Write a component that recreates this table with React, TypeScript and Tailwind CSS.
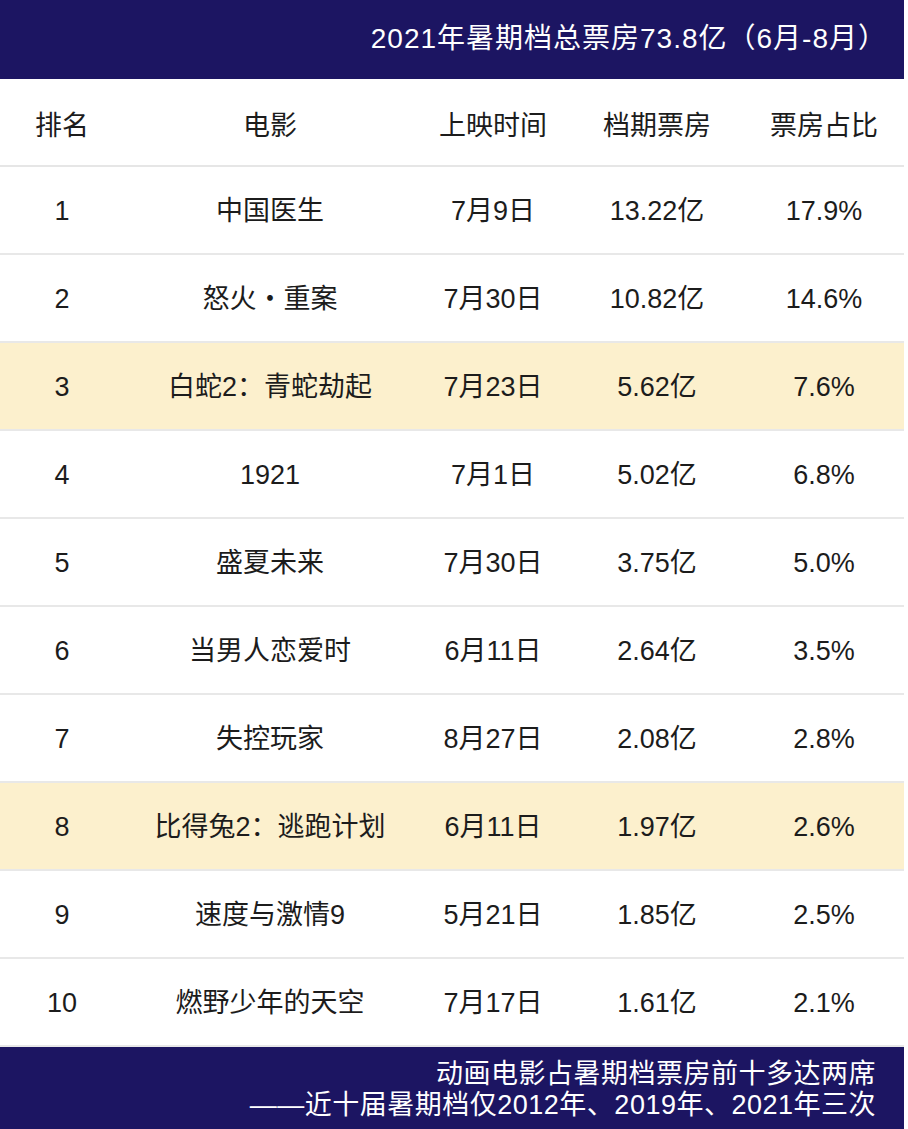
import React from "react";

type Row = {
  rank: string;
  title: string;
  date: string;
  gross: string;
  share: string;
  highlight?: boolean;
};

const rows: Row[] = [
  { rank: "1", title: "中国医生", date: "7月9日", gross: "13.22亿", share: "17.9%" },
  { rank: "2", title: "怒火・重案", date: "7月30日", gross: "10.82亿", share: "14.6%" },
  { rank: "3", title: "白蛇2：青蛇劫起", date: "7月23日", gross: "5.62亿", share: "7.6%", highlight: true },
  { rank: "4", title: "1921", date: "7月1日", gross: "5.02亿", share: "6.8%" },
  { rank: "5", title: "盛夏未来", date: "7月30日", gross: "3.75亿", share: "5.0%" },
  { rank: "6", title: "当男人恋爱时", date: "6月11日", gross: "2.64亿", share: "3.5%" },
  { rank: "7", title: "失控玩家", date: "8月27日", gross: "2.08亿", share: "2.8%" },
  { rank: "8", title: "比得兔2：逃跑计划", date: "6月11日", gross: "1.97亿", share: "2.6%", highlight: true },
  { rank: "9", title: "速度与激情9", date: "5月21日", gross: "1.85亿", share: "2.5%" },
  { rank: "10", title: "燃野少年的天空", date: "7月17日", gross: "1.61亿", share: "2.1%" },
];

const cols = "grid grid-cols-[124px_292px_154px_174px_160px] items-center text-center";

export default function App() {
  return (
    <div className="w-[908px] h-[1129px] bg-white text-[#1c1c1c] font-['Liberation_Sans','Noto_Sans_CJK_SC',sans-serif]">
      <div className="w-[904px]">
        <div className="h-[79px] bg-[#1c1562] flex items-center justify-end pr-[17px] pb-[2px] text-white text-[28px] tracking-[1px]">
          2021年暑期档总票房73.8亿（6月-8月）
        </div>
        <div className={`${cols} h-[88px] pt-[8px] text-[27px] border-b-2 border-[#e6e6e6]`}>
          <span>排名</span>
          <span>电影</span>
          <span>上映时间</span>
          <span>档期票房</span>
          <span>票房占比</span>
        </div>
        {rows.map((r) => (
          <div
            key={r.rank}
            className={`${cols} h-[88px] pt-[2px] text-[27px] border-b-2 border-[#e8e8e8] ${r.highlight ? "bg-[#fcf0cd]" : "bg-white"}`}
          >
            <span>{r.rank}</span>
            <span>{r.title}</span>
            <span>{r.date}</span>
            <span>{r.gross}</span>
            <span>{r.share}</span>
          </div>
        ))}
        <div className="h-[85px] bg-[#1c1562] flex flex-col items-end justify-center pr-[28px] text-white text-[27px] tracking-[0.5px] leading-[31px]">
          <span>动画电影占暑期档票房前十多达两席</span>
          <span>——近十届暑期档仅2012年、2019年、2021年三次</span>
        </div>
      </div>
    </div>
  );
}
